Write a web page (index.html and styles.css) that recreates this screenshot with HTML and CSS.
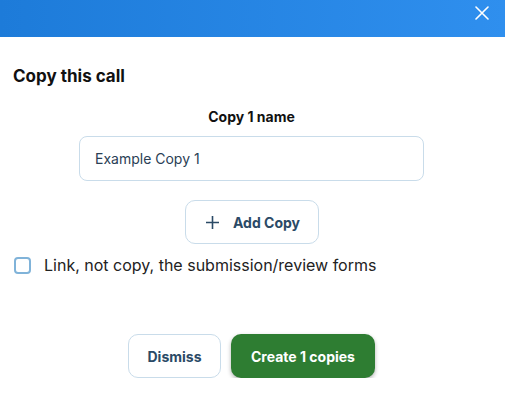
FILE: index.html
```html
<!DOCTYPE html>
<html lang="en">
<head>
    <meta charset="UTF-8">
    <meta name="viewport" content="width=device-width, initial-scale=1.0">
    <title>Copy this call</title>
    <link rel="stylesheet" href="styles.css">
</head>
<body>
    <div class="topbar">
        <button class="close" aria-label="Close">
            <svg width="14" height="14" viewBox="0 0 14 14"><path d="M1 1L13 13M13 1L1 13" stroke="#fff" stroke-width="1.6" stroke-linecap="round"/></svg>
        </button>
    </div>
    <div class="dialog">
        <h2>Copy this call</h2>
        <div class="copy-item">
            <label for="copy1">Copy 1 name</label>
            <input id="copy1" type="text" value="Example Copy 1">
        </div>
        <div class="add-row">
            <button class="btn btn-outline add">
                <svg width="15" height="15" viewBox="0 0 15 15"><path d="M7.5 1V14M1 7.5H14" stroke="#2b4a66" stroke-width="1.6"/></svg>
                Add Copy
            </button>
        </div>
        <label class="check">
            <span class="box"></span>
            Link, not copy, the submission/review forms
        </label>
        <div class="actions">
            <button class="btn btn-outline">Dismiss</button>
            <button class="btn btn-green">Create 1 copies</button>
        </div>
    </div>
</body>
</html>
```

FILE: styles.css
```css
body { margin: 0; font-family: Inter, "Noto Sans", sans-serif; background: #fff; color: #111; }
.topbar { height: 37px; background: linear-gradient(90deg, #1d7bd9, #2f8fee); display: flex; justify-content: flex-end; align-items: center; padding-right: 16px; }
.close { background: none; border: none; padding: 0; margin-top: -12px; width: 14px; height: 14px; cursor: pointer; }
.close svg { display: block; }
.dialog { padding: 29px 15px 0 13px; }
h2 { margin: 0; font-size: 17px; font-weight: 700; line-height: 20px; }
.copy-item { display: flex; flex-direction: column; align-items: center; margin-top: 22px; }
.copy-item label { font-size: 14px; font-weight: 700; line-height: 17px; margin-bottom: 11px; }
.copy-item input { width: 345px; height: 45px; box-sizing: border-box; border: 1px solid #c9dcea; border-radius: 8px; padding: 0 15px; font-family: inherit; font-size: 14px; color: #2a4055; }
.add-row { display: flex; justify-content: center; margin-top: 19px; }
.btn { height: 44px; border-radius: 10px; font-family: inherit; font-size: 14px; font-weight: 700; cursor: pointer; box-sizing: border-box; }
.btn-outline { background: #fff; border: 1px solid #c9dcea; color: #2b4a66; }
.add { width: 134px; display: flex; align-items: center; justify-content: center; gap: 13px; padding: 0 0 0 2px; }
.check { display: flex; align-items: center; gap: 13px; margin-top: 11px; margin-left: 1px; font-size: 16px; color: #222; }
.box { width: 17px; height: 17px; box-sizing: border-box; border: 2px solid #80b3d9; border-radius: 4px; }
.actions { display: flex; justify-content: center; gap: 10px; margin-top: 59px; }
.actions .btn-outline { width: 93px; }
.btn-green { width: 144px; background: #2e7d32; border: none; color: #fff; box-shadow: 0 2px 4px rgba(0,0,0,0.3); }
```
